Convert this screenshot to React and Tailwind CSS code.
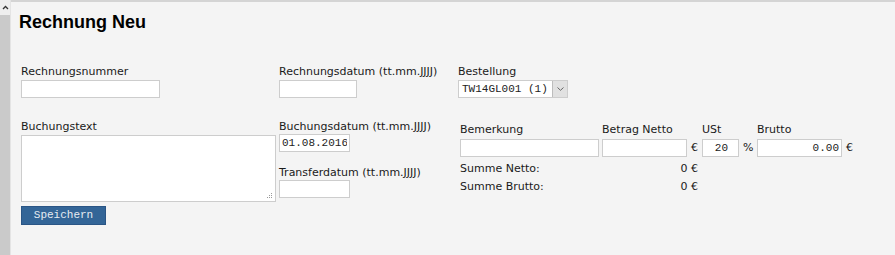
import React from "react";

const inputCls =
  "block h-[18px] border border-[#cdcdcd] bg-white outline-none font-['Liberation_Mono',monospace] text-[11px] text-[#222] px-[2px]";
const labelCls = "block leading-[14px] whitespace-nowrap";

export default function App() {
  return (
    <div className="flex h-[255px] w-[895px] overflow-hidden bg-[#f4f4f4] font-['DejaVu_Sans',sans-serif] text-[11px] text-[#1a1a1a]">
      <div className="flex w-[11px] shrink-0 flex-col border-r border-[#e4e4e4]">
        <div className="flex h-[15px] items-start justify-center bg-[#eeeeee] pt-[5px]">
          <svg width="7" height="5" viewBox="0 0 7 5">
            <path d="M1 4 L3.5 1.5 L6 4" fill="none" stroke="#333" strokeWidth="1.3" />
          </svg>
        </div>
        <div className="flex-1 bg-[#cacaca]" />
      </div>
      <div className="flex-1 border-t-2 border-[#d4d4d4]">
        <h1 className="mt-[9px] pl-[8px] font-['Liberation_Sans',sans-serif] text-[18px] font-bold leading-[22px] text-black">
          Rechnung Neu
        </h1>

        <div className="mt-[32px] flex pl-[10px]">
          <div className="w-[258px] shrink-0">
            <span className={labelCls}>Rechnungsnummer</span>
            <input className={`${inputCls} mt-[1px] w-[139px]`} defaultValue="" />
          </div>
          <div className="w-[179px] shrink-0">
            <span className={labelCls}>Rechnungsdatum (tt.mm.JJJJ)</span>
            <input className={`${inputCls} mt-[1px] w-[78px]`} defaultValue="" />
          </div>
          <div>
            <span className={labelCls}>Bestellung</span>
            <div className="mt-[1px] flex h-[18px] w-[110px] items-stretch border border-[#cdcdcd] bg-white">
              <span className="flex flex-1 items-center pl-[3px] font-['Liberation_Mono',monospace] text-[11px] text-[#222]">
                TW14GL001 (1)
              </span>
              <span className="flex w-[15px] items-center justify-center border-l border-[#bdbdbd] bg-[#e1e1e1]">
                <svg width="7" height="4" viewBox="0 0 7 4">
                  <path d="M0.5 0.5 L3.5 3.3 L6.5 0.5" fill="none" stroke="#666" strokeWidth="1" />
                </svg>
              </span>
            </div>
          </div>
        </div>

        <div className="mt-[22px] flex pl-[10px]">
          <div className="w-[258px] shrink-0">
            <span className={labelCls}>Buchungstext</span>
            <div className="relative mt-[1px] w-[255px]">
              <textarea className="block h-[67px] w-[255px] resize-none border border-[#cdcdcd] bg-white outline-none" />
              <svg className="absolute bottom-[3px] right-[3px]" width="6" height="6" viewBox="0 0 6 6">
                <rect x="4" y="0" width="1" height="1" fill="#999" />
                <rect x="2" y="2" width="1" height="1" fill="#999" />
                <rect x="4" y="2" width="1" height="1" fill="#999" />
                <rect x="0" y="4" width="1" height="1" fill="#999" />
                <rect x="2" y="4" width="1" height="1" fill="#999" />
                <rect x="4" y="4" width="1" height="1" fill="#999" />
              </svg>
            </div>
            <button className="mt-[4px] flex h-[19px] w-[85px] items-center justify-center border border-[#2a5585] bg-[#336597] font-['Liberation_Mono',monospace] text-[11px] text-[#e6ecf2]">
              Speichern
            </button>
          </div>
          <div className="w-[179px] shrink-0">
            <span className={labelCls}>Buchungsdatum (tt.mm.JJJJ)</span>
            <input className={`${inputCls} w-[71px]`} defaultValue="01.08.2016" />
            <span className={`${labelCls} mt-[14px]`}>Transferdatum (tt.mm.JJJJ)</span>
            <input className={`${inputCls} w-[71px]`} defaultValue="" />
          </div>
          <div className="pl-[2px] pt-[3px]">
            <div className="flex">
              <div className="w-[142px]">
                <span className={labelCls}>Bemerkung</span>
                <input className={`${inputCls} mt-[2px] w-[139px]`} defaultValue="" />
              </div>
              <div className="w-[100px]">
                <span className={labelCls}>Betrag Netto</span>
                <div className="mt-[2px] flex items-center">
                  <input className={`${inputCls} w-[85px]`} defaultValue="" />
                  <span className="ml-[4px] leading-[18px]">€</span>
                </div>
              </div>
              <div className="w-[55px]">
                <span className={labelCls}>USt</span>
                <div className="mt-[2px] flex items-center">
                  <input className={`${inputCls} w-[37px] pr-[10px] text-right`} defaultValue="20" />
                  <span className="ml-[4px] leading-[18px]">%</span>
                </div>
              </div>
              <div>
                <span className={labelCls}>Brutto</span>
                <div className="mt-[2px] flex items-center">
                  <input className={`${inputCls} w-[85px] text-right`} defaultValue="0.00" />
                  <span className="ml-[4px] leading-[18px]">€</span>
                </div>
              </div>
            </div>
            <div className="mt-[3px] flex w-[238px] justify-between leading-[18px]">
              <span>Summe Netto:</span>
              <span>0 €</span>
            </div>
            <div className="flex w-[238px] justify-between leading-[18px]">
              <span>Summe Brutto:</span>
              <span>0 €</span>
            </div>
          </div>
        </div>
      </div>
    </div>
  );
}
